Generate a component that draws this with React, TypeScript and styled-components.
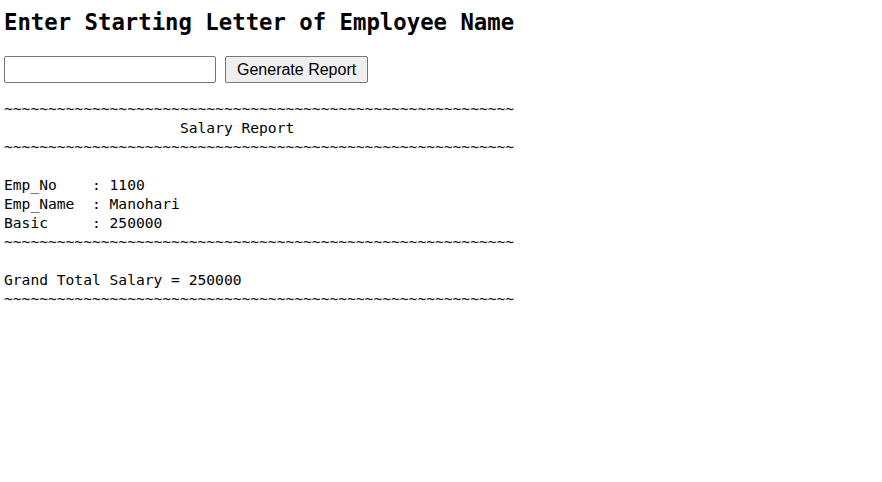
import React from "react";
import styled, { createGlobalStyle } from "styled-components";

const GlobalStyle = createGlobalStyle`
  html, body {
    margin: 0;
    padding: 0;
    background: #ffffff;
    color: #000000;
  }
`;

const Page = styled.div`
  padding: 0 4px;
`;

const Heading = styled.h2`
  margin: 8px 0 0;
  font-family: "DejaVu Sans Mono", monospace;
  font-weight: bold;
  font-size: 22.3px;
  line-height: 28px;
  white-space: nowrap;
`;

const Form = styled.div`
  display: flex;
  align-items: center;
  gap: 9px;
  margin-top: 20px;
`;

const TextInput = styled.input`
  box-sizing: border-box;
  width: 212px;
  height: 27px;
  margin: 0;
  padding: 1px 3px;
  border: 1px solid #767676;
  border-radius: 2px;
  font-family: "Liberation Sans", Arial, sans-serif;
  font-size: 16px;
  background: #ffffff;
`;

const Button = styled.button`
  box-sizing: border-box;
  height: 27px;
  margin: 0;
  padding: 0 11px;
  border: 1px solid #767676;
  border-radius: 2px;
  background: #efefef;
  color: #000000;
  font-family: "Liberation Sans", Arial, sans-serif;
  font-size: 16px;
  line-height: 25px;
`;

const Report = styled.div`
  margin-top: 16px;
  font-family: "DejaVu Sans Mono", monospace;
  font-size: 14.62px;
  line-height: 19px;
  white-space: pre;
`;

const Line = styled.div<{ $rule?: boolean }>`
  height: 19px;
  color: ${(p) => (p.$rule ? "#1a1a1a" : "#000000")};
`;

const rule = "~".repeat(58);

const fields: [string, string][] = [
  ["Emp_No", "1100"],
  ["Emp_Name", "Manohari"],
  ["Basic", "250000"],
];

export default function App() {
  return (
    <Page>
      <GlobalStyle />
      <Heading>Enter Starting Letter of Employee Name</Heading>
      <Form>
        <TextInput type="text" />
        <Button type="button">Generate Report</Button>
      </Form>
      <Report>
        <Line $rule>{rule}</Line>
        <Line>{" ".repeat(20) + "Salary Report"}</Line>
        <Line $rule>{rule}</Line>
        <Line />
        {fields.map(([k, v]) => (
          <Line key={k}>{k.padEnd(10, " ") + ": " + v}</Line>
        ))}
        <Line $rule>{rule}</Line>
        <Line />
        <Line>Grand Total Salary = 250000</Line>
        <Line $rule>{rule}</Line>
      </Report>
    </Page>
  );
}
